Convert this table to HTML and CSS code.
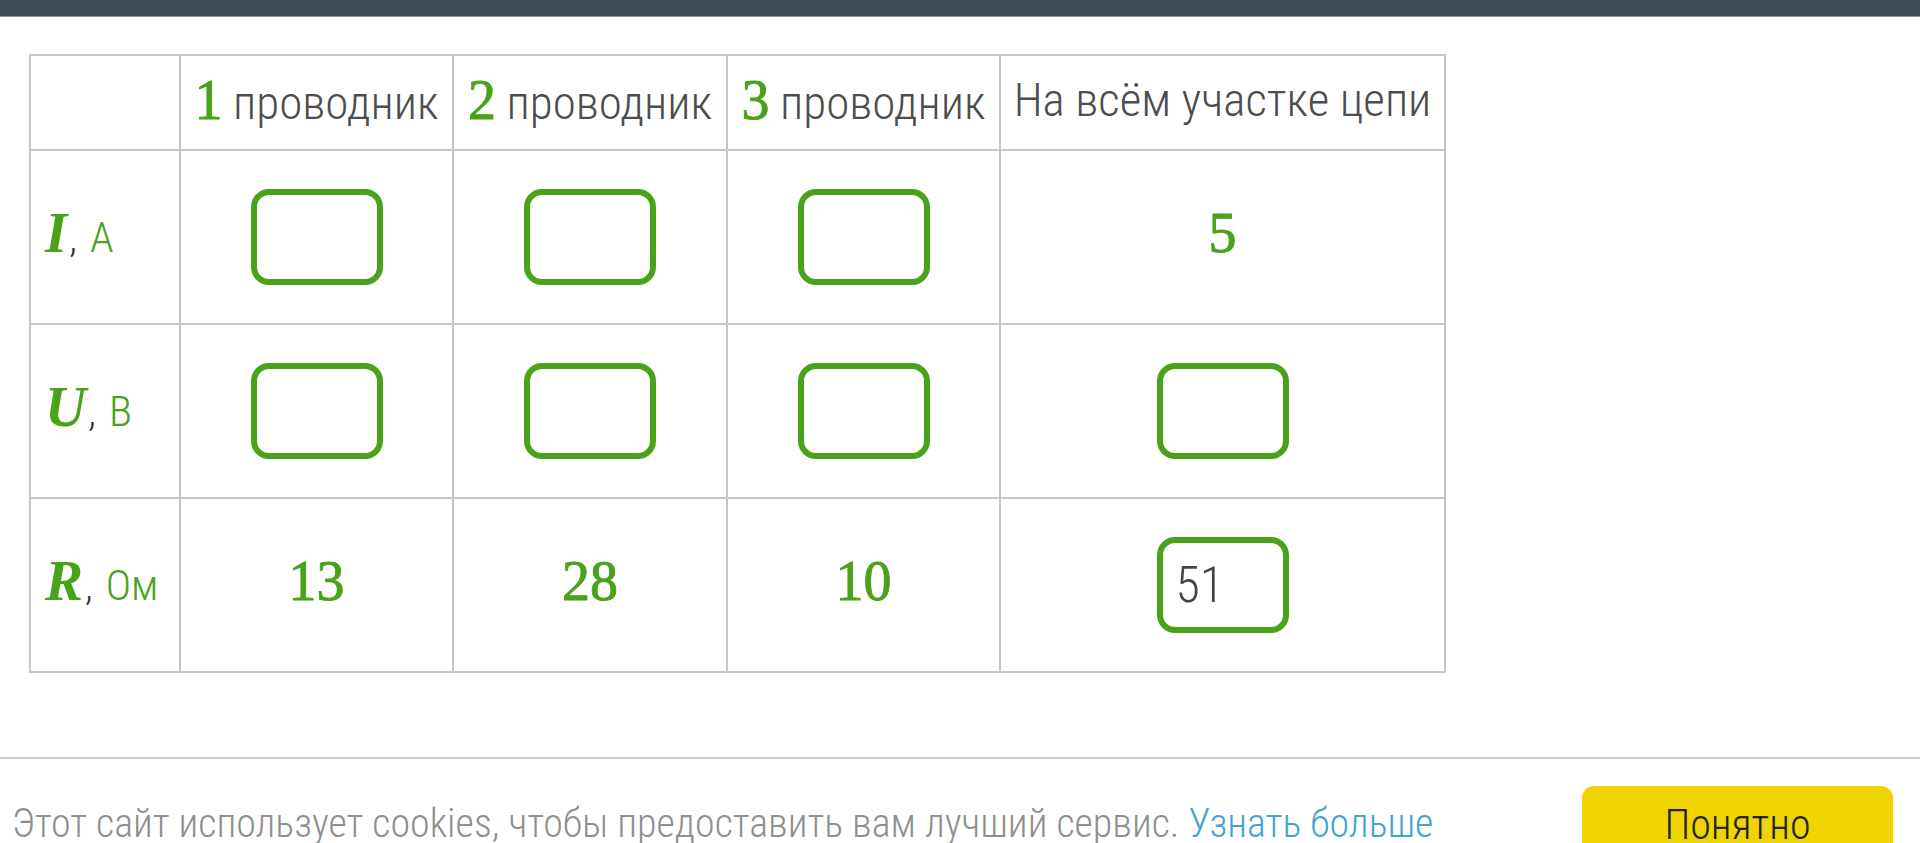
FILE: index.html
```html
<!DOCTYPE html>
<html lang="ru">
<head>
<meta charset="utf-8">
<title>Таблица</title>
<link rel="stylesheet" href="styles.css">
</head>
<body>
<div class="topbar"></div>
<main class="content">
  <table class="grid">
    <colgroup>
      <col class="c-label">
      <col class="c-wire">
      <col class="c-wire2">
      <col class="c-wire">
      <col class="c-total">
    </colgroup>
    <thead>
      <tr>
        <th class="corner"></th>
        <th class="head"><span class="m">1</span> проводник</th>
        <th class="head"><span class="m">2</span> проводник</th>
        <th class="head"><span class="m">3</span> проводник</th>
        <th class="head">На всём участке цепи</th>
      </tr>
    </thead>
    <tbody>
      <tr>
        <th class="rowhead"><span class="mi">I</span><span class="comma">,</span><span class="unit">А</span></th>
        <td><span class="box"></span></td>
        <td><span class="box"></span></td>
        <td><span class="box"></span></td>
        <td class="num"><span class="m">5</span></td>
      </tr>
      <tr>
        <th class="rowhead"><span class="mi">U</span><span class="comma">,</span><span class="unit">В</span></th>
        <td><span class="box"></span></td>
        <td><span class="box"></span></td>
        <td><span class="box"></span></td>
        <td><span class="box"></span></td>
      </tr>
      <tr>
        <th class="rowhead"><span class="mi">R</span><span class="comma">,</span><span class="unit">Ом</span></th>
        <td class="num"><span class="m">13</span></td>
        <td class="num"><span class="m">28</span></td>
        <td class="num"><span class="m">10</span></td>
        <td><span class="box filled">51</span></td>
      </tr>
    </tbody>
  </table>
</main>
<footer class="cookie">
  <p class="cookie-text">Этот сайт использует cookies, чтобы предоставить вам лучший сервис. <a class="more" href="#">Узнать больше</a></p>
  <button class="ok" type="button">Понятно</button>
</footer>
</body>
</html>
```
FILE: styles.css
```css
html, body {
  margin: 0;
  padding: 0;
  background: #ffffff;
}
body {
  font-family: "Roboto Condensed", "Roboto", sans-serif;
  font-stretch: condensed;
  font-weight: 300;
  color: #4a4a4a;
  overflow: hidden;
}
.topbar {
  height: 16px;
  background: #3d4f58;
  border-bottom: 1px solid #7e97a3;
}
.content {
  padding: 37px 0 84px 29px;
}
.grid {
  border-collapse: collapse;
  table-layout: fixed;
  width: 1415px;
}
.c-label { width: 150px; }
.c-wire { width: 273px; }
.c-wire2 { width: 274px; }
.c-total { width: 445px; }
.grid th,
.grid td {
  border: 2px solid #c6c6c6;
  padding: 0;
  text-align: center;
  vertical-align: middle;
  font-weight: 300;
}
.grid thead th {
  height: 87px;
  padding-bottom: 6px;
  font-size: 47px;
  color: #4d4d4d;
  white-space: nowrap;
}
.grid tbody th,
.grid tbody td {
  height: 172px;
}
.grid tbody td.num {
  height: 164px;
  padding-bottom: 8px;
}
.m {
  font-family: "Liberation Serif", "Times New Roman", serif;
  font-stretch: normal;
  font-weight: 400;
  font-size: 56px;
  color: #48a21a;
  -webkit-text-stroke: 0.9px #48a21a;
}
.grid tbody th.rowhead {
  height: 162px;
  padding: 0 0 10px 14px;
  text-align: left;
  white-space: nowrap;
}
.mi {
  font-family: "Liberation Serif", "Times New Roman", serif;
  font-stretch: normal;
  font-style: italic;
  font-weight: 700;
  font-size: 57px;
  color: #48a21a;
}
.comma {
  font-size: 40px;
  color: #333333;
  margin: 0 13px 0 2px;
}
.unit {
  font-size: 43px;
  color: #48a21a;
}
.box {
  display: inline-block;
  box-sizing: border-box;
  width: 132px;
  height: 96px;
  border: 6px solid #48a21a;
  border-radius: 18px;
  vertical-align: middle;
  text-align: left;
}
.box.filled {
  padding-left: 13px;
  font-size: 50px;
  line-height: 84px;
  color: #444444;
}
.cookie {
  border-top: 2px solid #cccccc;
  display: flex;
  justify-content: space-between;
  align-items: flex-start;
  padding: 27px 27px 0 12px;
}
.cookie-text {
  margin: 0;
  padding-top: 12px;
  font-size: 40px;
  line-height: 52px;
  color: #8f8f8f;
}
.more {
  color: #45a3d3;
  text-decoration: none;
}
.ok {
  width: 311px;
  height: 100px;
  border: none;
  border-radius: 12px;
  background: #f0d400;
  padding: 13px 0 0;
  font-family: "Roboto Condensed", "Roboto", sans-serif;
  font-stretch: condensed;
  font-weight: 300;
  font-size: 42px;
  line-height: 52px;
  color: #222222;
  display: flex;
  justify-content: center;
  align-items: flex-start;
}
```
